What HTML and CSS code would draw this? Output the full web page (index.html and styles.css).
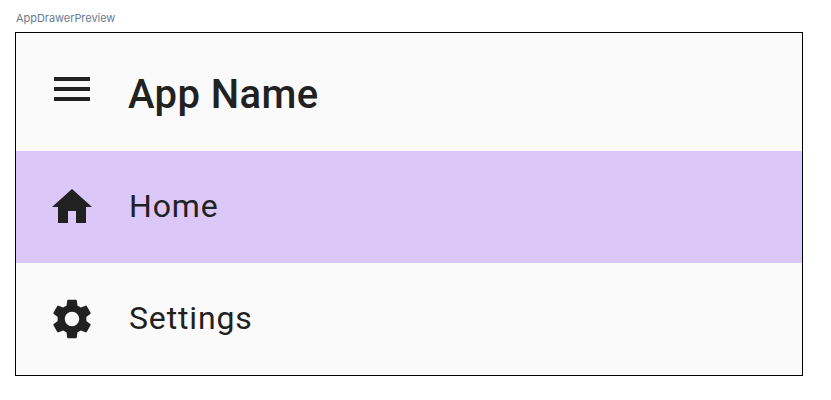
FILE: index.html
```html
<!DOCTYPE html>
<html lang="en">
<head>
    <meta charset="UTF-8">
    <meta name="viewport" content="width=device-width, initial-scale=1.0">
    <title>App Drawer</title>
    <link rel="stylesheet" href="styles.css">
</head>
<body>

    <div class="preview-label">AppDrawerPreview</div>

    <div class="drawer">
        <!-- Header -->
        <div class="header">
            <svg class="icon" viewBox="0 0 24 24"><path d="M3 18h18v-2H3v2zm0-5h18v-2H3v2zm0-7v2h18V6H3z"/></svg>
            <h1>App Name</h1>
        </div>

        <!-- Items -->
        <div class="item selected">
            <svg class="icon" viewBox="0 0 24 24"><path d="M10 20v-6h4v6h5v-8h3L12 3 2 12h3v8z"/></svg>
            <span>Home</span>
        </div>
        <div class="item">
            <svg class="icon" viewBox="0 0 24 24"><path d="M19.14 12.94c.04-.3.06-.61.06-.94 0-.32-.02-.64-.07-.94l2.03-1.58c.18-.14.23-.41.12-.61l-1.92-3.32c-.12-.22-.37-.29-.59-.22l-2.39.96c-.5-.38-1.03-.7-1.62-.94l-.36-2.54c-.04-.24-.24-.41-.48-.41h-3.84c-.24 0-.43.17-.47.41l-.36 2.54c-.59.24-1.13.57-1.62.94l-2.39-.96c-.22-.08-.47 0-.59.22L2.74 8.87c-.12.21-.08.47.12.61l2.03 1.58c-.05.3-.09.63-.09.94s.02.64.07.94l-2.03 1.58c-.18.14-.23.41-.12.61l1.92 3.32c.12.22.37.29.59.22l2.39-.96c.5.38 1.03.7 1.62.94l.36 2.54c.05.24.24.41.48.41h3.84c.24 0 .44-.17.47-.41l.36-2.54c.59-.24 1.13-.56 1.62-.94l2.39.96c.22.08.47 0 .59-.22l1.92-3.32c.12-.22.07-.47-.12-.61l-2.01-1.58zM12 15.6c-1.98 0-3.6-1.62-3.6-3.6s1.62-3.6 3.6-3.6 3.6 1.62 3.6 3.6-1.62 3.6-3.6 3.6z"/></svg>
            <span>Settings</span>
        </div>
    </div>

</body>
</html>
```
FILE: styles.css
```css
body {
    margin: 0;
    padding: 10px 28px 0 15px;
    background-color: #ffffff;
    font-family: Roboto, sans-serif;
    color: #212121;
}

.preview-label {
    height: 22px;
    padding-left: 1px;
    font-family: Inter, sans-serif;
    font-size: 11px;
    line-height: 16px;
    letter-spacing: -0.05px;
    color: #6c7a90;
}

/* Drawer */
.drawer {
    border: 1px solid #000000;
    background-color: #fafafa;
}

.header {
    display: flex;
    height: 118px;
    padding-left: 32px;
    box-sizing: border-box;
}

.header .icon {
    margin-top: 32px;
}

h1 {
    margin: 38px 0 0 32px;
    font-size: 40px;
    line-height: 48px;
    font-weight: 500;
    letter-spacing: 0.4px;
}

.item {
    display: flex;
    align-items: center;
    height: 112px;
    padding-left: 32px;
}

.item span {
    margin-left: 33px;
    padding-bottom: 2px;
    font-size: 32px;
    letter-spacing: 0.85px;
}

.selected {
    background-color: #dbc7f8;
}

.icon {
    width: 48px;
    height: 48px;
    flex-shrink: 0;
    fill: #212121;
}
```
